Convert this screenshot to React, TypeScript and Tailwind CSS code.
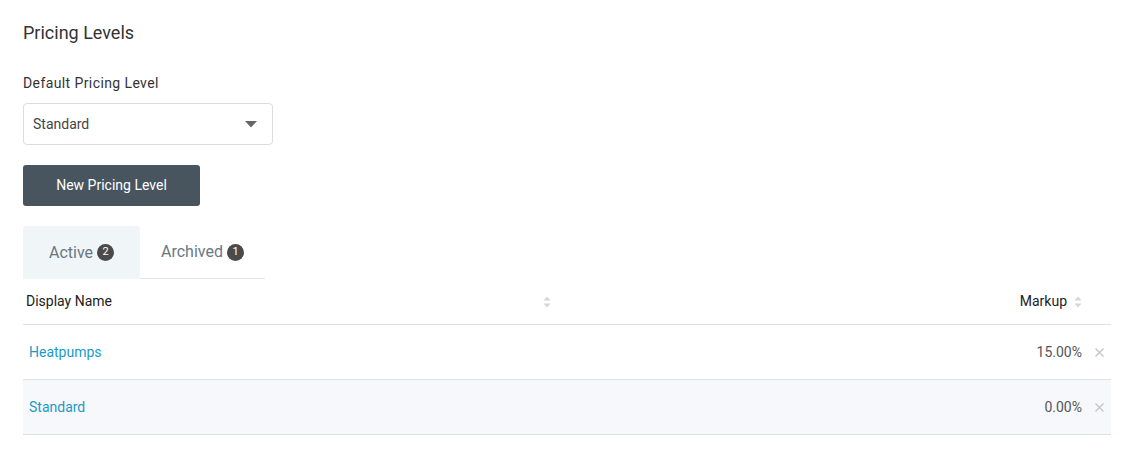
import React from "react";

type Level = { name: string; markup: string };

const levels: Level[] = [
  { name: "Heatpumps", markup: "15.00%" },
  { name: "Standard", markup: "0.00%" },
];

function SortIcon() {
  return (
    <svg width="8" height="12" viewBox="0 0 8 12" className="inline-block">
      <path d="M4 0.5 L7.5 4.5 L0.5 4.5 Z" fill="#d6d6d6" />
      <path d="M4 11.5 L7.5 7.5 L0.5 7.5 Z" fill="#d6d6d6" />
    </svg>
  );
}

function Badge({ n }: { n: number }) {
  return (
    <span className="ml-[4px] inline-flex h-[17px] w-[17px] items-center justify-center rounded-full bg-[#4a4a4a] text-[11px] text-white">
      {n}
    </span>
  );
}

function App() {
  return (
    <div
      className="w-[1134px] h-[452px] bg-white px-[23px] pt-[21px]"
      style={{ fontFamily: "Roboto, 'Liberation Sans', sans-serif" }}
    >
      <h1 className="text-[18px] leading-[24px] text-[#333]">Pricing Levels</h1>

      <div className="mt-[29px] text-[14px] leading-[19px] tracking-[0.4px] text-[#333]">
        Default Pricing Level
      </div>

      <div className="mt-[10px] flex h-[42px] w-[250px] items-center justify-between rounded-[4px] border border-[#dcdcdc] pl-[9px] pr-[15px]">
        <span className="text-[14px] text-[#444]">Standard</span>
        <svg width="12" height="7" viewBox="0 0 12 7">
          <path d="M0 0 L12 0 L6 6.5 Z" fill="#666" />
        </svg>
      </div>

      <button className="mt-[20px] flex h-[41px] w-[177px] items-center justify-center rounded-[3px] bg-[#48555f] text-[14px] text-white">
        New Pricing Level
      </button>

      <div className="mt-[20px] flex">
        <div className="flex h-[53px] w-[117px] items-center justify-center rounded-t-[3px] bg-[#f0f5f8] text-[16px] text-[#6b7780]">
          Active
          <Badge n={2} />
        </div>
        <div className="flex h-[53px] w-[125px] items-center justify-center border-b border-[#e6e6e6] text-[16px] text-[#6b7780]">
          Archived
          <Badge n={1} />
        </div>
      </div>

      <div className="w-[1088px]">
        <div className="flex h-[46px] items-center border-b border-[#dfe1e5] text-[14px] text-[#222]">
          <div className="flex w-[528px] items-center justify-between pl-[3px]">
            <span>Display Name</span>
            <SortIcon />
          </div>
          <div className="flex flex-1 items-center justify-end gap-[7px] pr-[29px]">
            <span>Markup</span>
            <SortIcon />
          </div>
        </div>
        {levels.map((l, i) => (
          <div
            key={l.name}
            className={
              "flex h-[55px] items-center border-b border-[#dfe1e5] text-[14px] " +
              (i % 2 === 1 ? "bg-[#f7f8fb]" : "bg-white")
            }
          >
            <div className="w-[528px] pl-[6px] text-[#1a9ac7]">{l.name}</div>
            <div className="flex flex-1 items-center justify-end pr-[7px] text-[#555]">
              <span>{l.markup}</span>
              <span className="ml-[13px] flex w-[9px] justify-center">
                <svg width="9" height="9" viewBox="0 0 9 9">
                  <path d="M0.5 0.5 L8.5 8.5 M8.5 0.5 L0.5 8.5" stroke="#c4c4c4" strokeWidth="1.3" />
                </svg>
              </span>
            </div>
          </div>
        ))}
      </div>
    </div>
  );
}

export default App;
